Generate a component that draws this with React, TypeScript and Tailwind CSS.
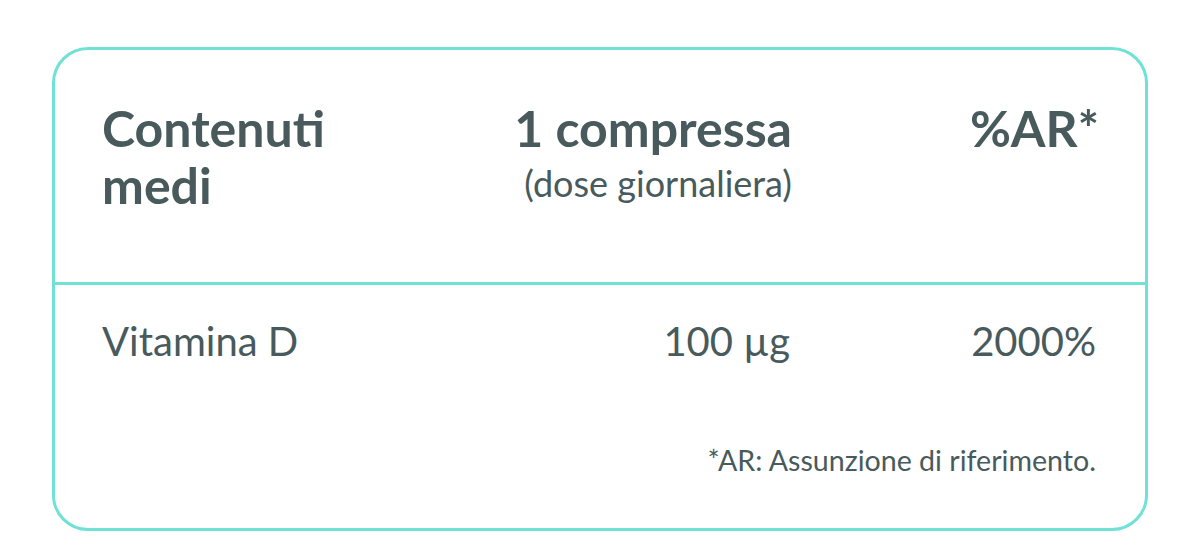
import React from "react";

export default function App() {
  return (
    <div className="w-[1200px] h-[558px] bg-white pt-[47px] px-[52px] font-['Lato',sans-serif] text-[#485a5c]">
      <div className="w-[1096px] h-[484px] border-[3px] border-[#70e2d5] rounded-[36px] flex flex-col">
        <div className="grid grid-cols-[390px_300px_304px] px-[47px] pt-[50px] h-[235px] shrink-0 border-b-[3px] border-[#70e2d5]">
          <div className="text-[50px] font-bold leading-[57px]">
            Contenuti
            <br />
            medi
          </div>
          <div className="text-right">
            <div className="text-[50px] font-bold leading-[57px] whitespace-nowrap">1 compressa</div>
            <div className="text-[36px] leading-[40px] mt-[6px] whitespace-nowrap">(dose giornaliera)</div>
          </div>
          <div className="text-right text-[50px] font-bold leading-[57px] -mr-[3px]">%AR*</div>
        </div>
        <div className="grid grid-cols-[390px_300px_304px] px-[47px] pt-[32px] text-[40px] leading-[48px]">
          <div>Vitamina D</div>
          <div className="text-right pr-[2px]">100 µg</div>
          <div className="text-right">2000%</div>
        </div>
        <div className="px-[47px] pt-[77px] text-right text-[28.6px] leading-[36px] pr-[49px]">
          *AR: Assunzione di riferimento.
        </div>
      </div>
    </div>
  );
}
